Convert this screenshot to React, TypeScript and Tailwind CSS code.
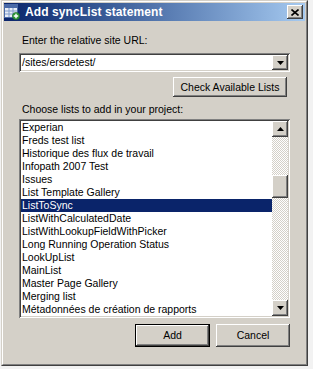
import React from 'react';

const raised =
  'shadow-[inset_-1px_-1px_#404040,inset_1px_1px_#ffffff,inset_-2px_-2px_#808080,inset_2px_2px_#d4d0c8]';
const sunken =
  'shadow-[inset_1px_1px_#808080,inset_-1px_-1px_#ffffff,inset_2px_2px_#404040,inset_-2px_-2px_#d4d0c8]';

const LISTS = [
  'Experian',
  'Freds test list',
  'Historique des flux de travail',
  'Infopath 2007 Test',
  'Issues',
  'List Template Gallery',
  'ListToSync',
  'ListWithCalculatedDate',
  'ListWithLookupFieldWithPicker',
  'Long Running Operation Status',
  'LookUpList',
  'MainList',
  'Master Page Gallery',
  'Merging list',
  'Métadonnées de création de rapports',
];

function Arrow({ dir }: { dir: 'up' | 'down' }) {
  return (
    <svg width="7" height="4" viewBox="0 0 7 4">
      {dir === 'up' ? <path d="M3.5 0 L7 4 L0 4 Z" fill="#000" /> : <path d="M0 0 L7 0 L3.5 4 Z" fill="#000" />}
    </svg>
  );
}

function TitleIcon() {
  return (
    <svg width="16" height="16" viewBox="0 0 16 16">
      <rect x="0.5" y="0.5" width="13" height="13" fill="#e8eef8" stroke="#4a6aa8" />
      <rect x="1" y="1" width="12" height="3" fill="#4a6aa8" />
      <path d="M1 7h12M1 10h12M5 4v9M9 4v9" stroke="#7f9acb" strokeWidth="1" />
      <circle cx="12" cy="12" r="3.6" fill="#2e9a3a" stroke="#1d6b26" strokeWidth="0.6" />
      <path d="M12 9.8v4.4M9.8 12h4.4" stroke="#fff" strokeWidth="1.4" />
    </svg>
  );
}

export default function App() {
  const selected = 'ListToSync';

  return (
    <div
      className="w-[313px] h-[369px] bg-[#f2f2f2] text-[10.5px] leading-[13px] text-black"
      style={{ fontFamily: '"Liberation Sans", Arial, sans-serif' }}
    >
      <div className="ml-[1px] w-[307px] h-[366px] flex flex-col border border-t-[#d4d0c8] border-l-[#d4d0c8] border-r-[#404040] border-b-[#404040]">
        <div className="flex-1 flex flex-col border border-t-white border-l-white border-r-[#808080] border-b-[#808080] bg-[#d4d0c8] p-[1px]">
          {/* title bar */}
          <div className="h-[18px] flex items-center bg-linear-to-r from-[#0a246a] to-[#a6caf0] pr-[2px]">
            <TitleIcon />
            <span className="ml-[5px] text-[12px] font-bold text-white tracking-[0.1px]">Add syncList statement</span>
            <button className={`ml-auto w-[16px] h-[14px] flex items-center justify-center bg-[#d4d0c8] ${raised}`}>
              <svg width="8" height="7" viewBox="0 0 8 7">
                <path d="M0.5 0.5 L7.5 6.5 M7.5 0.5 L0.5 6.5" stroke="#000" strokeWidth="1.6" />
              </svg>
            </button>
          </div>

          {/* body */}
          <div className="flex flex-col px-[15px]">
            <div className="mt-[13px] pl-[3px]">Enter the relative site URL:</div>

            <div className={`mt-[6px] w-[271px] h-[19px] flex items-stretch bg-white p-[2px] ${sunken}`}>
              <div className="flex-1 pl-[1px] flex items-center">/sites/ersdetest/</div>
              <div className={`w-[16px] flex items-center justify-center bg-[#d4d0c8] ${raised}`}>
                <Arrow dir="down" />
              </div>
            </div>

            <button
              className={`mt-[5px] self-end mr-[3px] w-[114px] h-[20px] bg-[#d4d0c8] flex items-center justify-center ${raised}`}
            >
              Check Available Lists
            </button>

            <div className="mt-[6px] pl-[3px]">Choose lists to add in your project:</div>

            <div className={`mt-[3px] w-[271px] h-[199px] flex bg-white p-[2px] ${sunken}`}>
              <div className="flex-1 overflow-hidden">
                {LISTS.map((name) => (
                  <div
                    key={name}
                    className={`h-[13px] pl-[1px] whitespace-nowrap overflow-hidden ${
                      name === selected ? 'bg-[#0a246a] text-white' : ''
                    }`}
                  >
                    {name}
                  </div>
                ))}
              </div>
              <div className="w-[16px] flex flex-col">
                <div className={`h-[16px] flex items-center justify-center bg-[#d4d0c8] ${raised}`}>
                  <Arrow dir="up" />
                </div>
                <div className="flex-1 flex flex-col bg-[repeating-conic-gradient(#d4d0c8_0%_25%,#ffffff_0%_50%)] bg-[length:2px_2px]">
                  <div className="h-[38px]" />
                  <div className={`h-[23px] bg-[#d4d0c8] ${raised}`} />
                </div>
                <div className={`h-[16px] flex items-center justify-center bg-[#d4d0c8] ${raised}`}>
                  <Arrow dir="down" />
                </div>
              </div>
            </div>

            <div className="mt-[6px] flex justify-end gap-[6px] w-[271px]">
              <button className="w-[75px] h-[23px] border border-black bg-[#d4d0c8]">
                <div className={`w-full h-full flex items-center justify-center ${raised}`}>Add</div>
              </button>
              <button className={`w-[74px] h-[23px] bg-[#d4d0c8] flex items-center justify-center ${raised}`}>
                Cancel
              </button>
            </div>
          </div>
        </div>
      </div>
    </div>
  );
}
